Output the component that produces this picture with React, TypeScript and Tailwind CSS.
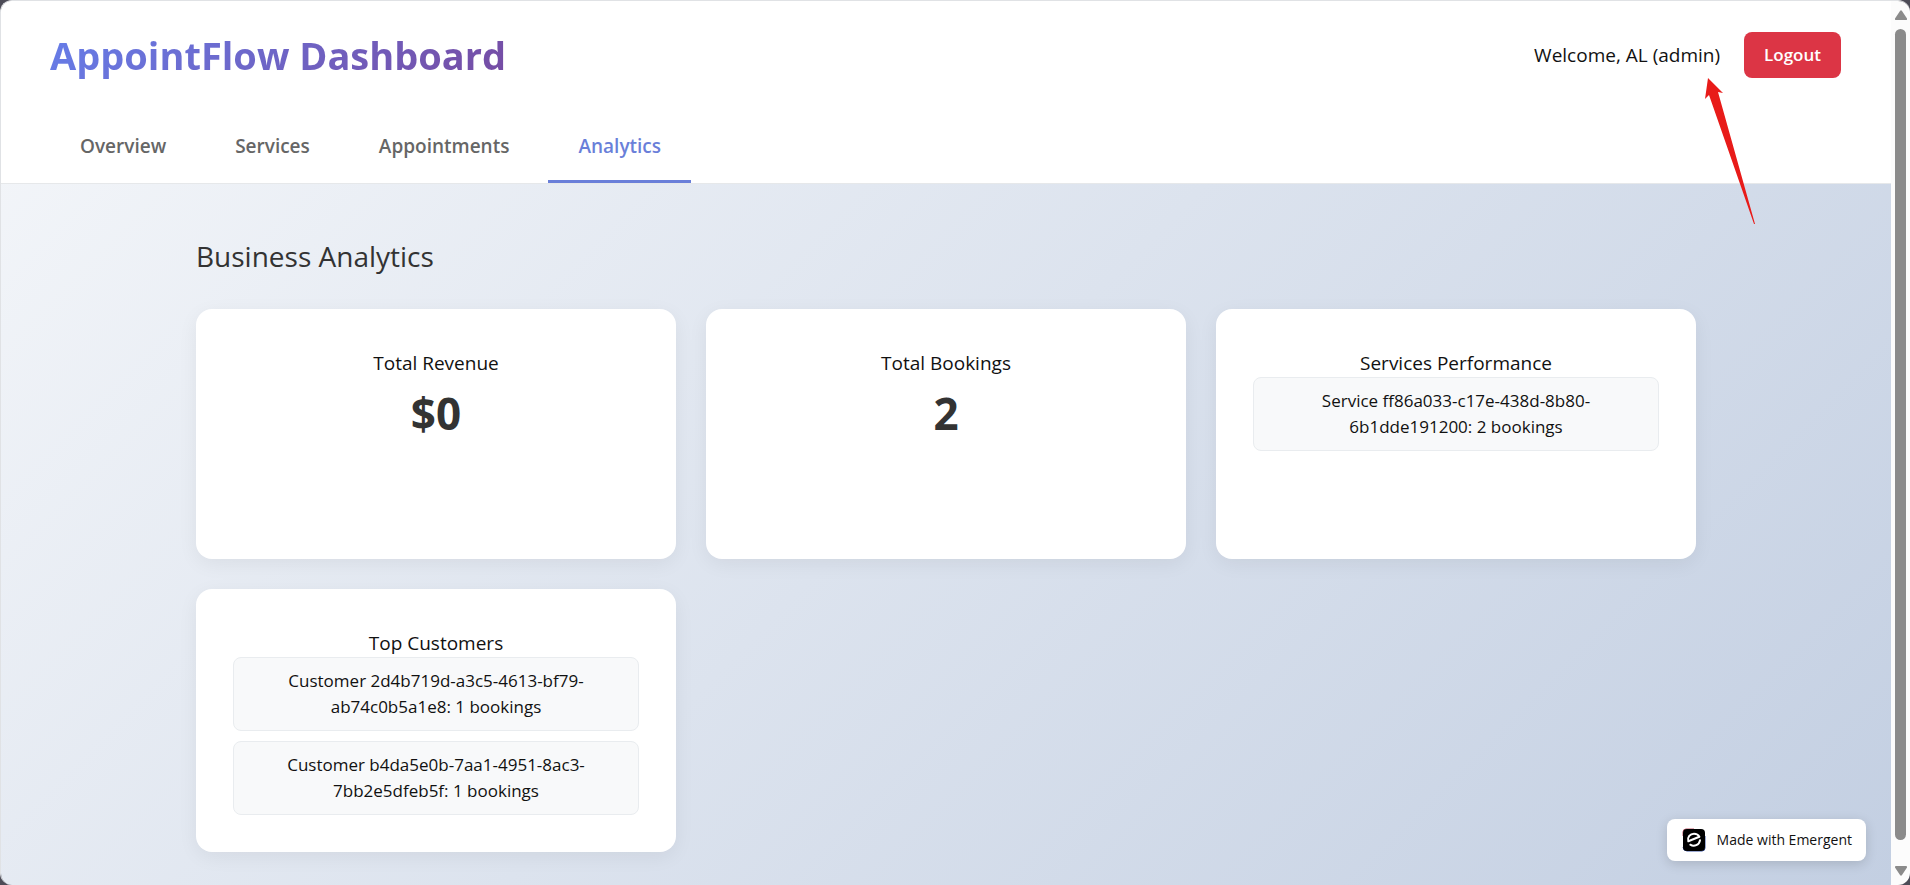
const tabs = ["Overview", "Services", "Appointments", "Analytics"];

const cards = [
  { title: "Total Revenue", value: "$0" },
  { title: "Total Bookings", value: "2" },
  {
    title: "Services Performance",
    items: ["Service ff86a033-c17e-438d-8b80-6b1dde191200: 2 bookings"],
  },
  {
    title: "Top Customers",
    items: [
      "Customer 2d4b719d-a3c5-4613-bf79-ab74c0b5a1e8: 1 bookings",
      "Customer b4da5e0b-7aa1-4951-8ac3-7bb2e5dfeb5f: 1 bookings",
    ],
  },
];

const Header = () => (
  <header className="bg-white border-b border-[#e6e8ea]">
    <div className="flex items-center justify-between px-[49px] pt-6 pr-[50px]">
      <h1
        className="text-[38px] leading-[60px] font-bold text-transparent bg-clip-text
        bg-[linear-gradient(135deg,#667eea_0%,#764ba2_100%)]"
      >
        AppointFlow Dashboard
      </h1>
      <div className="flex items-center gap-6">
        <span className="text-[19px]">Welcome, AL (admin)</span>
        <button
          type="button"
          className="h-[46px] px-5 rounded-lg bg-[#dc3545] text-white text-[17px] font-semibold"
        >
          Logout
        </button>
      </div>
    </div>

    <nav className="flex gap-[9px] px-[49px] pt-7">
      {tabs.map((tab) => (
        <button
          key={tab}
          type="button"
          className={
            tab === "Analytics"
              ? "h-[70px] px-[30px] text-[19px] font-semibold border-b-3 border-[#6a7fd9] text-[#6a7fd9]"
              : "h-[70px] px-[30px] text-[19px] font-semibold border-b-3 border-transparent text-[#666]"
          }
        >
          {tab}
        </button>
      ))}
    </nav>
  </header>
);

const Card = ({ title, value, items }: { title: string; value?: string; items?: string[] }) => (
  <section className="min-h-[250px] px-[37px] pt-10 pb-[37px] rounded-2xl bg-white text-center shadow-[0_5px_20px_rgba(0,0,0,0.06)]">
    <h3 className="text-[19px] leading-7">{title}</h3>
    {value && <p className="text-[44px] leading-[72px] font-bold text-[#333]">{value}</p>}
    {items && (
      <ul className="flex flex-col gap-[10px]">
        {items.map((item) => (
          <li
            key={item}
            className="px-10 py-[10px] rounded-lg border border-[#e9ecef] bg-[#f8f9fa] text-[17px] leading-[26px]"
          >
            {item}
          </li>
        ))}
      </ul>
    )}
  </section>
);

const Badge = () => (
  <a
    href="#"
    className="absolute right-[25px] bottom-6 flex items-center gap-[11px] h-[42px] pl-[15px] pr-[14px]
    rounded-lg bg-white text-sm shadow-[0_3px_12px_rgba(0,0,0,0.15)]"
  >
    <svg className="size-6" viewBox="0 0 24 24" fill="none">
      <path d="M1 8V4q0-3 3-3h8" stroke="#c0566b" strokeWidth="1" />
      <path d="M23 8v12q0 3-3 3H5q-4 0-4-4" stroke="#3b55a5" strokeWidth="1" />
      <rect x="1" y="1" width="22" height="22" rx="4" fill="#000" />
      <g stroke="#fff" strokeWidth="2" strokeLinecap="round" strokeLinejoin="round">
        <path d="M6.300 13.300C5.200 9 8 5.800 12 5.800c2.300 0 4.300 1 5.400 3L6.300 13.300" />
        <path d="M8.300 16.700c3.800 2.400 8.900.3 9.700-4.400" />
      </g>
    </svg>
    Made with Emergent
  </a>
);

// red marker pointing at the role name
const Pointer = () => (
  <svg
    className="absolute right-[136px] top-[77px] w-[50px] h-[147px]"
    viewBox="0 0 50 147"
    fill="#e81b19"
  >
    <path d="M3 0 18 15l-5-1L50 146h-1L4 17l-4 4z" />
  </svg>
);

const Scrollbar = () => (
  <div className="w-[19px] shrink-0 flex flex-col items-center bg-[#fcfcfc]" aria-hidden="true">
    <svg className="mt-[9px] w-3 h-[10px]" viewBox="0 0 12 10" fill="#8b8b8b">
      <path d="M5 1q1-1.600 2 0l5 7.500q.3 1.500-1 1.500H1q-1.300 0-1-1.500z" />
    </svg>
    <div className="mt-[9px] w-[11px] flex-1 rounded-full bg-[#8b8b8b]" />
    <svg className="mt-[26px] mb-[9px] w-3 h-[10px]" viewBox="0 0 12 10" fill="#8b8b8b">
      <path d="M5 9q1 1.600 2 0l5-7.500q.3-1.500-1-1.500H1q-1.300 0-1 1.500z" />
    </svg>
  </div>
);

export default function App() {
  return (
    <div className="min-h-screen flex bg-[#4d4c57] text-[#111] font-['Open_Sans','Noto_Sans',sans-serif]">
      <div className="flex-1 flex rounded-xl overflow-hidden border-t border-l border-[#e0e2e5]">
        <div className="relative flex-1 bg-[linear-gradient(135deg,#f5f7fa_0%,#c3cfe2_100%)]">
          <Header />
          <main className="max-w-[1500px] mx-auto pt-[50px] pb-7">
            <h2 className="mb-[30px] text-[28px] leading-[45px] text-[#333]">Business Analytics</h2>
            <div className="grid grid-cols-3 items-start gap-[30px]">
              {cards.map((card) => (
                <Card key={card.title} {...card} />
              ))}
            </div>
          </main>
          <Pointer />
          <Badge />
        </div>
        <Scrollbar />
      </div>
    </div>
  );
}
